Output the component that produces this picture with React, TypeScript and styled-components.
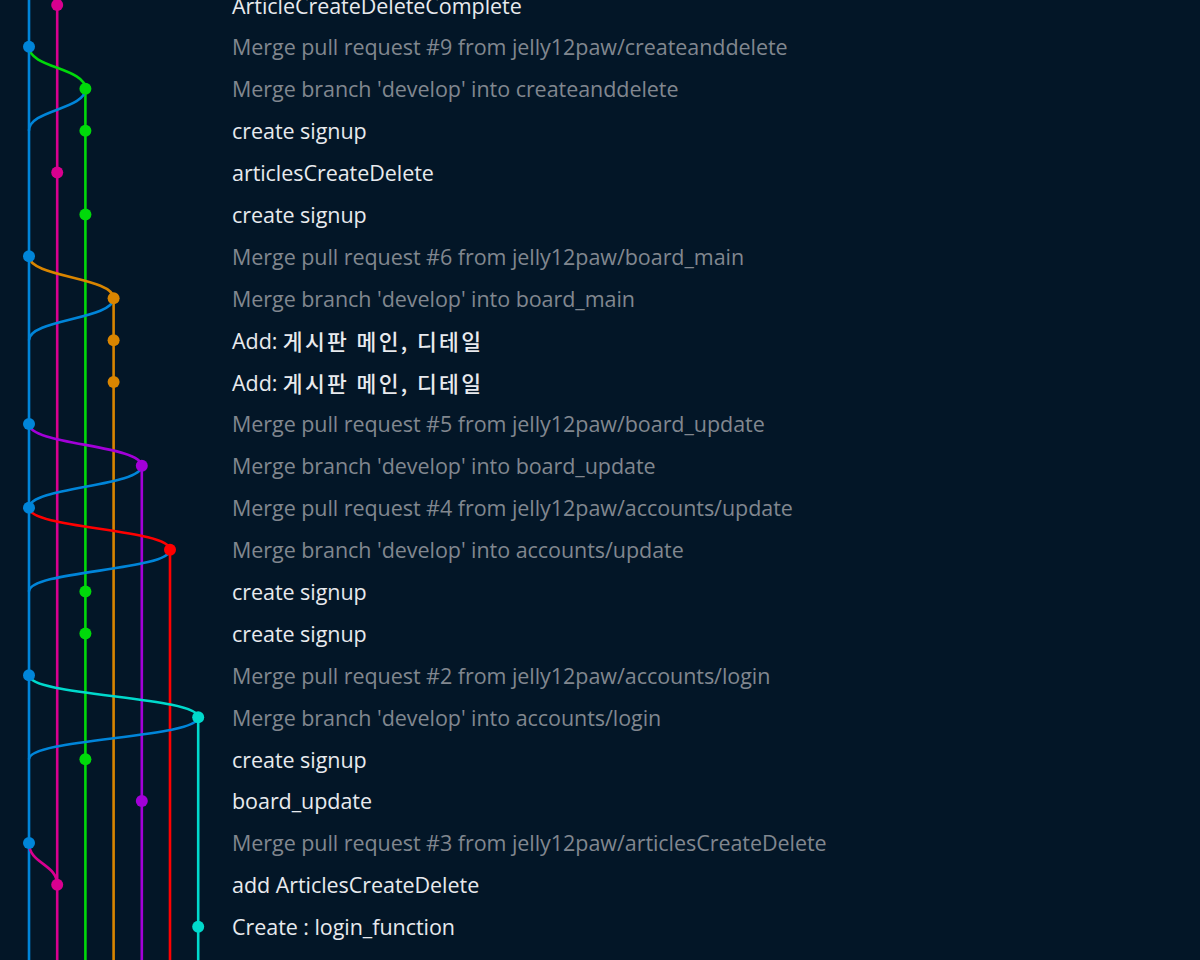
import React from "react";
import styled, { createGlobalStyle } from "styled-components";

const ROW = 41.9;
const LANE_X0 = 29;
const LANE_GAP = 28.2;
const GRAPH_W = 232;

// git graph default palette
const COLORS = ["#0085d9", "#d9008f", "#00d90a", "#d98500", "#a300d9", "#ff0000", "#00d9cc"];

type Commit = {
  msg: string,
  lane: number,
  merge?: boolean,
}

const commits: Commit[] = [
  { msg: "ArticleCreateDeleteComplete", lane: 1 },
  { msg: "Merge pull request #9 from jelly12paw/createanddelete", lane: 0, merge: true },
  { msg: "Merge branch 'develop' into createanddelete", lane: 2, merge: true },
  { msg: "create signup", lane: 2 },
  { msg: "articlesCreateDelete", lane: 1 },
  { msg: "create signup", lane: 2 },
  { msg: "Merge pull request #6 from jelly12paw/board_main", lane: 0, merge: true },
  { msg: "Merge branch 'develop' into board_main", lane: 3, merge: true },
  { msg: "Add: 게시판 메인, 디테일", lane: 3 },
  { msg: "Add: 게시판 메인, 디테일", lane: 3 },
  { msg: "Merge pull request #5 from jelly12paw/board_update", lane: 0, merge: true },
  { msg: "Merge branch 'develop' into board_update", lane: 4, merge: true },
  { msg: "Merge pull request #4 from jelly12paw/accounts/update", lane: 0, merge: true },
  { msg: "Merge branch 'develop' into accounts/update", lane: 5, merge: true },
  { msg: "create signup", lane: 2 },
  { msg: "create signup", lane: 2 },
  { msg: "Merge pull request #2 from jelly12paw/accounts/login", lane: 0, merge: true },
  { msg: "Merge branch 'develop' into accounts/login", lane: 6, merge: true },
  { msg: "create signup", lane: 2 },
  { msg: "board_update", lane: 4 },
  { msg: "Merge pull request #3 from jelly12paw/articlesCreateDelete", lane: 0, merge: true },
  { msg: "add ArticlesCreateDelete", lane: 1 },
  { msg: "Create : login_function", lane: 6 },
  { msg: "accounts login", lane: 5 },
];

// row where each lane starts (-1 = from the top)
const laneStart = [-1, -1, 2, 7, 11, 13, 17];

// merge commit on develop -> first commit of branch, then branch back to develop
const branches = [
  { row: 1, lane: 2, back: true },
  { row: 6, lane: 3, back: true },
  { row: 10, lane: 4, back: true },
  { row: 12, lane: 5, back: true },
  { row: 16, lane: 6, back: true },
  { row: 20, lane: 1, back: false },
];

const laneX = (lane: number) => LANE_X0 + LANE_GAP * lane;
const rowY = (row: number) => ROW / 2 + ROW * row;

const curve = (x1: number, y1: number, x2: number, y2: number) => {
  const ym = (y1 + y2) / 2;
  return `M${x1},${y1} C${x1},${ym} ${x2},${ym} ${x2},${y2}`;
};

const GlobalStyle = createGlobalStyle`
  html, body {
    margin: 0;
    padding: 0;
    background: #031627;
    overflow: hidden;
  }
`;

const Page = styled.div`
  width: 1200px;
  height: 960px;
  overflow: hidden;
  background: #031627;
  font-family: "Open Sans", "Noto Sans CJK KR", sans-serif;
`;

const GraphView = styled.div`
  display: flex;
  margin-top: -${ROW / 2 - 5}px;
`;

const GraphSvg = styled.svg`
  flex: none;
  display: block;
`;

const CommitList = styled.div`
  display: flex;
  flex-direction: column;
`;

const CommitRow = styled.div<{ $merge?: boolean }>`
  height: ${ROW}px;
  display: flex;
  align-items: center;
  white-space: nowrap;
  font-size: 21.5px;
  letter-spacing: -0.05px;
  color: ${props => props.$merge ? "#81878f" : "#e8eaee"};
  font-weight: ${props => props.$merge ? 400 : 500};
`;

const Hangul = styled.span`
  font-family: "Noto Sans CJK KR", sans-serif;
  letter-spacing: 2.4px;
  margin-left: 0.25em;
`;

// korean glyphs in the reference run wider than the latin ones
const renderMsg = (msg: string) => {
  const idx = msg.search(/[\uac00-\ud7a3]/);
  if (idx < 0) return msg;
  return (
    <>
      {msg.slice(0, idx).trimEnd()}
      <Hangul>{msg.slice(idx)}</Hangul>
    </>
  );
};

const Graph = () => {
  const height = ROW * commits.length;
  return (
    <GraphSvg width={GRAPH_W} height={height}>
      {laneStart.map((start, lane) => (
        <line
          key={"l" + lane}
          x1={laneX(lane)}
          x2={laneX(lane)}
          y1={start < 0 ? 0 : rowY(start)}
          y2={height}
          stroke={COLORS[lane]}
          strokeWidth={2.6}
        />
      ))}
      {branches.map(b => (
        <g key={"b" + b.row} fill="none" strokeWidth={2.6}>
          <path d={curve(laneX(0), rowY(b.row), laneX(b.lane), rowY(b.row + 1))} stroke={COLORS[b.lane]} />
          {b.back && (
            <path d={curve(laneX(b.lane), rowY(b.row + 1), laneX(0), rowY(b.row + 2))} stroke={COLORS[0]} />
          )}
        </g>
      ))}
      {commits.map((c, i) => (
        <circle key={"c" + i} cx={laneX(c.lane)} cy={rowY(i)} r={6} fill={COLORS[c.lane]} />
      ))}
    </GraphSvg>
  );
};

const App = () => {
  return (
    <Page>
      <GlobalStyle />
      <GraphView>
        <Graph />
        <CommitList>
          {commits.map((c, i) => (
            <CommitRow key={i} $merge={c.merge}>{renderMsg(c.msg)}</CommitRow>
          ))}
        </CommitList>
      </GraphView>
    </Page>
  );
};

export default App;
